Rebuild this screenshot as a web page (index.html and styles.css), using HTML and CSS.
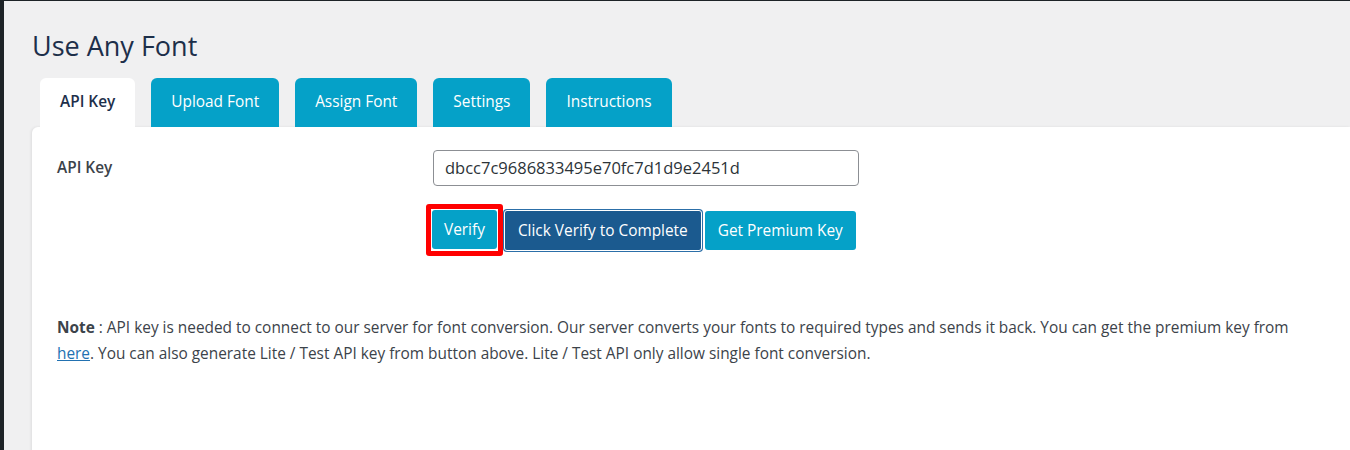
FILE: index.html
```html
<!DOCTYPE html>
<html>
<head>
<meta charset="utf-8">
<link rel="stylesheet" href="styles.css">
</head>
<body>
<div class="frame">
  <div class="wrap">
    <h1 class="title">Use Any Font</h1>
    <div class="tabs">
      <div class="tab active">API Key</div>
      <div class="tab">Upload Font</div>
      <div class="tab">Assign Font</div>
      <div class="tab">Settings</div>
      <div class="tab">Instructions</div>
    </div>
    <div class="panel">
      <div class="row">
        <div class="label">API Key</div>
        <div class="field">
          <div class="input">dbcc7c9686833495e70fc7d1d9e2451d</div>
          <div class="buttons">
            <div class="highlight"><div class="btn verify">Verify</div></div>
            <div class="btn dark">Click Verify to Complete</div>
            <div class="btn">Get Premium Key</div>
          </div>
        </div>
      </div>
      <p class="note"><b>Note</b> : API key is needed to connect to our server for font conversion. Our server converts your fonts to required types and sends it back. You can get the premium key from <a href="#">here</a>. You can also generate Lite / Test API key from button above. Lite / Test API only allow single font conversion.</p>
    </div>
  </div>
</div>
</body>
</html>
```
FILE: styles.css
```css
html, body {
  margin: 0;
  padding: 0;
  background: #1d2327;
  height: 100%;
  overflow: hidden;
}
body {
  font-family: "Open Sans", "Noto Sans", sans-serif;
}
.frame {
  margin: 1px 0 0 4px;
  background: #f0f0f1;
  height: 449px;
  overflow: hidden;
}
.wrap {
  padding-left: 28px;
}
.title {
  margin: 0;
  padding-top: 27px;
  font-size: 27px;
  font-weight: 400;
  line-height: 36px;
  color: #1d2f4a;
}
.tabs {
  display: flex;
  gap: 16px;
  padding-left: 8px;
  margin-top: 14px;
}
.tab {
  height: 49px;
  line-height: 48px;
  padding: 0 20px;
  background: #05a1c8;
  color: #fff;
  font-size: 15.4px;
  border-radius: 6px 6px 0 0;
}
.tab.active {
  background: #fff;
  color: #1d2f4a;
  font-weight: 600;
}
.panel {
  background: #fff;
  border-radius: 6px 0 0 0;
  box-shadow: -1px 0 3px rgba(0,0,0,0.08);
  height: 330px;
  padding: 23px 25px 0 25px;
}
.row {
  display: flex;
}
.label {
  width: 376px;
  font-size: 15.4px;
  font-weight: 600;
  color: #3c434a;
  padding-top: 7px;
}
.input {
  width: 402px;
  height: 34px;
  border: 1px solid #8c8f94;
  border-radius: 4px;
  padding: 0 11px;
  font-size: 16.5px;
  line-height: 34px;
  color: #2c3338;
}
.buttons {
  display: flex;
  align-items: center;
  margin-top: 18px;
  margin-left: -7px;
}
.highlight {
  border: 5px solid #f00;
  border-radius: 3px;
  padding: 1px 1px 2px 1px;
}
.btn {
  background: #05a1c8;
  color: #fff;
  font-size: 15.4px;
  height: 39px;
  line-height: 39px;
  padding: 0 13px;
  border-radius: 3px;
}
.btn.verify {
  padding: 0 12px;
}
.btn.dark {
  background: #1b5a8f;
  border: 1px solid #fff;
  box-shadow: 0 0 0 1px #2c6fa8;
  height: 39px;
  line-height: 39px;
  padding: 0 13px;
  margin: 0 3px 0 1px;
}
.note {
  margin: 59px 0 0;
  max-width: 1250px;
  font-size: 15.4px;
  line-height: 26px;
  color: #3c434a;
}
.note a {
  color: #2271b1;
}
```
